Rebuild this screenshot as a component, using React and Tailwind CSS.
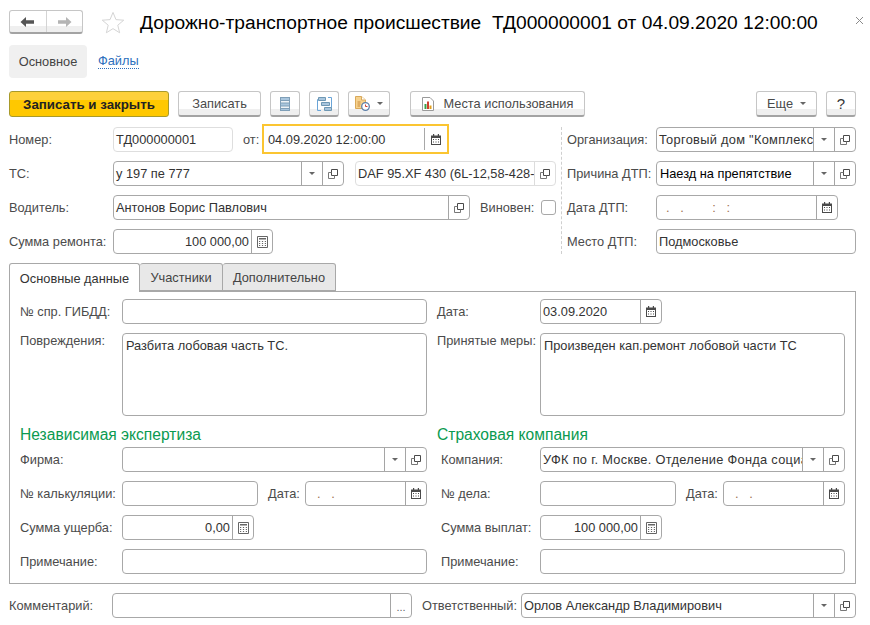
import React from "react";

/* ── Icons ─────────────────────────────── */
function ArrowLeft({ color }) {
  return (
    <svg width="15" height="12" viewBox="0 0 15 12">
      <path d="M0.5 6 L6 1 V4.2 H14 V7.8 H6 V11 Z" fill={color} />
    </svg>
  );
}

function ArrowRight({ color }) {
  return (
    <svg width="15" height="12" viewBox="0 0 15 12">
      <path d="M14.5 6 L9 1 V4.2 H1 V7.8 H9 V11 Z" fill={color} />
    </svg>
  );
}

function Star() {
  return (
    <svg width="24" height="23" viewBox="0 0 25 24">
      <path d="M12.5 1.5 L15.6 9 L23.7 9.6 L17.5 14.8 L19.4 22.7 L12.5 18.4 L5.6 22.7 L7.5 14.8 L1.3 9.6 L9.4 9 Z"
        fill="#fff" stroke="#d2d2d2" strokeWidth="1" />
    </svg>
  );
}

function Tri() {
  return (
    <svg width="6" height="3" viewBox="0 0 6 3">
      <path d="M0 0 H6 L3 3 Z" fill="#666" />
    </svg>
  );
}

function OpenIcon() {
  return (
    <svg width="10" height="10" viewBox="0 0 10 10" fill="none" stroke="#4a4a4a">
      <path d="M3.5 0.5 H9.5 V6.5 H3.5 Z" />
      <path d="M3.5 3.5 H0.5 V9.5 H6.5 V6.5" stroke="#777" />
    </svg>
  );
}

function CalendarIcon() {
  return (
    <svg width="10" height="11" viewBox="0 0 10 11">
      <path d="M0 1.5 H10 V11 H0 Z" fill="#4a4a4a" />
      <path d="M2 0 H3.2 V2 H2 Z M6.8 0 H8 V2 H6.8 Z" fill="#4a4a4a" />
      <path d="M1 4 H9 V10 H1 Z" fill="#fff" />
      <path d="M2 5 H3 V6 H2 Z M4.5 5 H5.5 V6 H4.5 Z M7 5 H8 V6 H7 Z M2 7.5 H3 V8.5 H2 Z M4.5 7.5 H5.5 V8.5 H4.5 Z M7 7.5 H8 V8.5 H7 Z" fill="#4a4a4a" />
    </svg>
  );
}

function CalcIcon() {
  return (
    <svg width="11" height="12" viewBox="0 0 11 12">
      <path d="M0.5 0.5 H10.5 V11.5 H0.5 Z" fill="#fff" stroke="#666" />
      <path d="M2 2 H9 V3.6 H2 Z" fill="#666" />
      <path d="M2 5 H3.2 V6 H2 Z M4.9 5 H6.1 V6 H4.9 Z M7.8 5 H9 V6 H7.8 Z M2 7 H3.2 V8 H2 Z M4.9 7 H6.1 V8 H4.9 Z M7.8 7 H9 V8 H7.8 Z M2 9 H3.2 V10 H2 Z M4.9 9 H6.1 V10 H4.9 Z M7.8 9 H9 V10 H7.8 Z" fill="#666" />
    </svg>
  );
}

function ListIcon() {
  return (
    <svg width="10" height="14" viewBox="0 0 10 14">
      <path d="M0 0 H10 V14 H0 Z" fill="#7f9fb8" />
      <path d="M1 1 H9 V3 H1 Z" fill="#a9c6de" />
      <path d="M1 4 H9 V5.5 H1 Z" fill="#eef3f7" />
      <path d="M1 6.5 H9 V8.5 H1 Z" fill="#a9c6de" />
      <path d="M1 9.5 H9 V11 H1 Z" fill="#eef3f7" />
      <path d="M1 12 H9 V13 H1 Z" fill="#a9c6de" />
    </svg>
  );
}

function StructIcon() {
  return (
    <svg width="15" height="14" viewBox="0 0 15 14" fill="none">
      <path d="M2.5 2.5 H0.5 V13.5 H4" stroke="#6aa5d8" />
      <path d="M11 0.5 H14.5 V10.5 H13" stroke="#6aa5d8" />
      <path d="M1.5 0.5 H8.5 V3.5 H1.5 Z M4.5 5.5 H12.5 V8.5 H4.5 Z M7.5 10.5 H14.5 V13.5 H7.5 Z" fill="#a9c6de" stroke="#6f98b4" />
    </svg>
  );
}

function DocClockIcon() {
  return (
    <svg width="15" height="15" viewBox="0 0 15 15">
      <path d="M0.5 0.5 H6.5 L10.5 4 V12.5 H0.5 Z" fill="#f6d28e" stroke="#d9a95a" />
      <path d="M6.5 0.5 V4 H10.5" fill="#fff" stroke="#d9a95a" />
      <path d="M2.5 6 H5.5 M2.5 8 H5.5 M2.5 10 H5" stroke="#c98a3a" />
      <circle cx="10.5" cy="10.5" r="3.8" fill="#fff" stroke="#5d7fa8" strokeWidth="1.3" />
      <path d="M10.5 8.5 V10.5 H12.5" stroke="#d04030" fill="none" />
    </svg>
  );
}

function ChartDocIcon() {
  return (
    <svg width="12" height="14" viewBox="0 0 12 14">
      <path d="M0.5 0.5 H8 L11.5 4 V13.5 H0.5 Z" fill="#fff" stroke="#9a9a9a" />
      <path d="M2.5 7 H4.5 V12 H2.5 Z" fill="#3aa04a" />
      <path d="M5 4.5 H7 V12 H5 Z" fill="#d04030" />
      <path d="M7.5 8.5 H9.5 V12 H7.5 Z" fill="#e0a020" />
    </svg>
  );
}

/* ── Controls ─────────────────────────────── */
const buttonFace = "border border-[#c6c6c6] border-b-[#a3a3a3] border-b-2 rounded-[3px] bg-[linear-gradient(#fff_0,#fff_72%,#efefef_72%,#efefef_100%)]";

function Button({ className = "", children }) {
  return (
    <div className={`h-[26px] flex items-center justify-center gap-[7px] text-[#4a4a4a] ${buttonFace} ${className}`}>
      {children}
    </div>
  );
}

function FieldButton({ children, light }) {
  return (
    <div className={`w-[21px] shrink-0 h-full flex items-center justify-center border-l ${light ? "border-[#dcdcdc]" : "border-[#a5a5a5]"}`}>
      {children}
    </div>
  );
}

function Field({ className = "", light, text, right, dark, buttons = [] }) {
  return (
    <div className={`h-[25px] flex items-stretch rounded-[4px] border bg-white overflow-hidden ${light ? "border-[#dedede]" : "border-[#a8a8a8]"} ${className}`}>
      <div className={`flex-1 min-w-0 flex items-center overflow-hidden whitespace-pre px-[2px] ${right ? "justify-end" : ""} ${dark ? "text-black" : "text-[#333]"}`}>
        {text}
      </div>
      {buttons.map((b) => (
        <FieldButton key={b} light={light}>
          {b === "select" && <Tri />}
          {b === "open" && <OpenIcon />}
          {b === "date" && <CalendarIcon />}
          {b === "calc" && <CalcIcon />}
          {b === "more" && <span className="text-[#666] text-[11px] mt-1">...</span>}
        </FieldButton>
      ))}
    </div>
  );
}

function Label({ className = "", children }) {
  return <div className={`shrink-0 text-[#4b4b4b] whitespace-nowrap ${className}`}>{children}</div>;
}

function Row({ className = "", children }) {
  return <div className={`flex items-center h-[25px] ${className}`}>{children}</div>;
}

const emptyDateTime = <span className="text-[#a0704f] pl-[7px]">{".   .        :   :"}</span>;
const emptyDate = <span className="text-[#a0704f] pl-[9px]">{".   ."}</span>;

function Heading({ children }) {
  return <div className="h-[20px] -mb-[7px] text-[15.6px] leading-[20px] text-[#0a9a50] whitespace-nowrap">{children}</div>;
}

export default function App() {
  return (
    <div className="w-[870px] h-[625px] overflow-hidden bg-white pl-[9px] pr-[14px] pt-[10px] text-[12.8px] leading-[15px] font-['Liberation_Sans',Arial,sans-serif]">

      {/* Title */}
      <div className="flex items-center h-[24px]">
        <div className={`w-[74px] h-[24px] flex ${buttonFace}`}>
          <div className="flex-1 flex items-center justify-center border-r border-[#d4d4d4]"><ArrowLeft color="#555" /></div>
          <div className="flex-1 flex items-center justify-center"><ArrowRight color="#b4b4b4" /></div>
        </div>
        <div className="ml-[18px] w-[24px] flex"><Star /></div>
        <div className="ml-[15px] text-[19.2px] text-black whitespace-pre">Дорожно-транспортное происшествие  ТД000000001 от 04.09.2020 12:00:00</div>
        <div className="ml-auto -mr-[8px] -mt-[4px]">
          <svg width="9" height="9" viewBox="0 0 9 9"><path d="M1 1 L8 8 M8 1 L1 8" stroke="#8a8a8a" /></svg>
        </div>
      </div>

      {/* Sections */}
      <div className="flex items-center mt-[11px] h-[33px]">
        <div className="w-[78px] h-[33px] rounded-[4px] bg-[#f0f0f0] flex items-center justify-center text-[#444]">Основное</div>
        <div className="ml-[11px] text-[#2c6fbd] border-b border-dotted border-[#2c6fbd] leading-[14px]">Файлы</div>
      </div>

      {/* Toolbar */}
      <div className="flex items-center mt-[13px] h-[26px] gap-[9px]">
        <div className="w-[160px] h-[26px] rounded-[3px] border border-[#a89a2a] flex items-center justify-center font-bold text-[13.3px] text-[#222] bg-[linear-gradient(#fdd13c_0,#fdd13c_35%,#ffc800_35%,#ffc800_100%)]">
          Записать и закрыть
        </div>
        <Button className="w-[83px]">Записать</Button>
        <Button className="w-[30px]"><ListIcon /></Button>
        <Button className="w-[30px]"><StructIcon /></Button>
        <Button className="w-[42px]"><DocClockIcon /><Tri /></Button>
        <Button className="w-[175px] ml-[11px] gap-[10px]"><ChartDocIcon />Места использования</Button>
        <Button className="w-[61px] ml-auto">Еще<Tri /></Button>
        <Button className="w-[30px] text-[15px] text-[#333]">?</Button>
      </div>

      {/* Header fields */}
      <div className="flex mt-[10px]">
        <div className="w-[547px] flex flex-col gap-[9px]">
          <Row>
            <Label className="w-[104px]">Номер:</Label>
            <Field className="w-[120px]" light text="ТД000000001" />
            <Label className="ml-[10px] w-[21px]">от:</Label>
            <div className="h-[26px] w-[183px] -mt-px flex items-stretch bg-white ring-2 ring-[#fbc531] pl-[4px] text-[#333]">
              <div className="flex-1 flex items-center">04.09.2020 12:00:00</div>
              <div className="w-[23px] my-[2px] flex items-center justify-center border-l border-[#a8a8a8]"><CalendarIcon /></div>
            </div>
          </Row>
          <Row>
            <Label className="w-[104px]">ТС:</Label>
            <Field className="w-[231px]" text="у 197 пе 777" buttons={["select", "open"]} />
            <Field className="w-[201px] ml-[11px]" light text="DAF 95.XF 430 (6L-12,58-428-л.с.)" buttons={["open"]} />
          </Row>
          <Row>
            <Label className="w-[104px]">Водитель:</Label>
            <Field className="w-[357px]" text="Антонов Борис Павлович" buttons={["open"]} />
            <Label className="ml-[10px] w-[61px]">Виновен:</Label>
            <div className="w-[15px] h-[15px] rounded-[3px] border border-[#a8a8a8] bg-white" />
          </Row>
          <Row>
            <Label className="w-[104px]">Сумма ремонта:</Label>
            <Field className="w-[160px]" right text="100 000,00" buttons={["calc"]} />
          </Row>
        </div>
        <div className="ml-[5px] border-l border-dashed border-[#cfcfcf]" />
        <div className="ml-[5px] w-[289px] flex flex-col gap-[9px]">
          <Row>
            <Label className="w-[89px]">Организация:</Label>
            <Field className="w-[200px]" text={<span className="tracking-[0.3px]">Торговый дом "Комплексный сервис"</span>} buttons={["select", "open"]} />
          </Row>
          <Row>
            <Label className="w-[89px]">Причина ДТП:</Label>
            <Field className="w-[200px]" dark text={<span className="pl-px">Наезд на препятствие</span>} buttons={["select", "open"]} />
          </Row>
          <Row>
            <Label className="w-[89px]">Дата ДТП:</Label>
            <Field className="w-[182px]" text={emptyDateTime} buttons={["date"]} />
          </Row>
          <Row>
            <Label className="w-[89px]">Место ДТП:</Label>
            <Field className="w-[200px]" text="Подмосковье" />
          </Row>
        </div>
      </div>

      {/* Tabs */}
      <div className="flex mt-[9px] h-[28px] relative z-10">
        <div className="w-[131px] h-[29px] flex items-center justify-center bg-white border border-b-0 border-[#a8a8a8] rounded-t-[3px] text-[#333]">Основные данные</div>
        <div className="w-[83px] h-[28px] flex items-center justify-center bg-[#e8e8e8] border border-l-0 border-[#a8a8a8] rounded-t-[3px] text-[#444]">Участники</div>
        <div className="w-[113px] h-[28px] flex items-center justify-center bg-[#e8e8e8] border border-l-0 border-[#a8a8a8] rounded-t-[3px] text-[#444]">Дополнительно</div>
      </div>

      <div className="h-[293px] border border-[#a8a8a8] pl-[10px] pt-[7px] flex gap-[10px]">
        {/* Left column */}
        <div className="w-[407px] flex flex-col gap-[9px]">
          <Row>
            <Label className="w-[102px]">№ спр. ГИБДД:</Label>
            <Field className="flex-1" />
          </Row>
          <div className="flex h-[83px]">
            <Label className="w-[102px]">Повреждения:</Label>
            <div className="flex-1 rounded-[4px] border border-[#a8a8a8] px-[3px] pt-[4px] text-[#333]">Разбита лобовая часть ТС.</div>
          </div>
          <Heading>Независимая экспертиза</Heading>
          <Row>
            <Label className="w-[102px]">Фирма:</Label>
            <Field className="flex-1" buttons={["select", "open"]} />
          </Row>
          <Row>
            <Label className="w-[102px]">№ калькуляции:</Label>
            <Field className="w-[136px]" />
            <Label className="ml-[10px] w-[37px]">Дата:</Label>
            <Field className="flex-1" text={emptyDate} buttons={["date"]} />
          </Row>
          <Row>
            <Label className="w-[102px]">Сумма ущерба:</Label>
            <Field className="w-[132px]" right text="0,00" buttons={["calc"]} />
          </Row>
          <Row>
            <Label className="w-[102px]">Примечание:</Label>
            <Field className="flex-1" />
          </Row>
        </div>

        {/* Right column */}
        <div className="w-[408px] flex flex-col gap-[9px]">
          <Row>
            <Label className="w-[103px]">Дата:</Label>
            <Field className="w-[122px]" text="03.09.2020" buttons={["date"]} />
          </Row>
          <div className="flex h-[83px]">
            <Label className="w-[103px]">Принятые меры:</Label>
            <div className="flex-1 rounded-[4px] border border-[#a8a8a8] px-[3px] pt-[4px] text-[#333]">Произведен кап.ремонт лобовой части ТС</div>
          </div>
          <Heading>Страховая компания</Heading>
          <Row>
            <Label className="w-[103px] pl-[4px]">Компания:</Label>
            <Field className="w-[305px]" text={<span className="tracking-[0.3px]">УФК по г. Москве. Отделение Фонда социального страхования</span>} buttons={["select", "open"]} />
          </Row>
          <Row>
            <Label className="w-[103px] pl-[4px]">№ дела:</Label>
            <Field className="w-[136px]" />
            <Label className="ml-[10px] w-[37px]">Дата:</Label>
            <Field className="flex-1" text={emptyDate} buttons={["date"]} />
          </Row>
          <Row>
            <Label className="w-[103px] pl-[4px]">Сумма выплат:</Label>
            <Field className="w-[122px]" right text="100 000,00" buttons={["calc"]} />
          </Row>
          <Row>
            <Label className="w-[103px] pl-[4px]">Примечание:</Label>
            <Field className="flex-1" />
          </Row>
        </div>
      </div>

      {/* Footer fields */}
      <Row className="mt-[9px]">
        <Label className="w-[103px]">Комментарий:</Label>
        <Field className="w-[300px]" buttons={["more"]} />
        <Label className="ml-[10px] w-[99px]">Ответственный:</Label>
        <Field className="w-[335px]" text="Орлов Александр Владимирович" buttons={["select", "open"]} />
      </Row>
    </div>
  );
}
